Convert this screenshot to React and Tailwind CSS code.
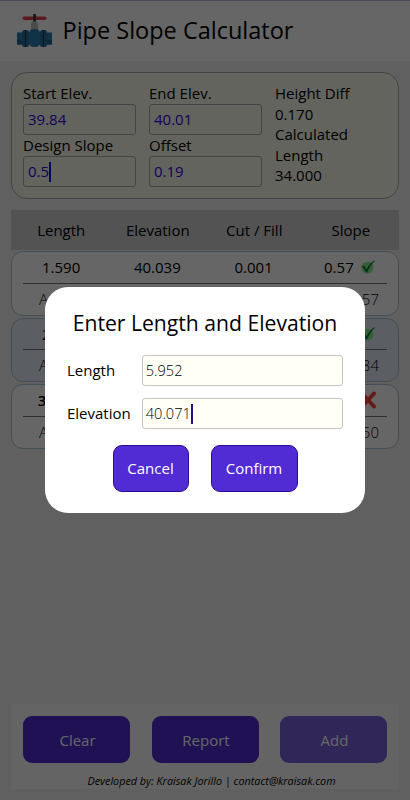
const rows = [
  { length: "1.590", elevation: "40.039", cutFill: "0.001", slope: "0.57", ok: true, last: "0.57", bg: "bg-white" },
  { length: "2.970", elevation: "40.025", cutFill: "0.000", slope: "0.52", ok: true, last: "0.84", bg: "bg-[#e4eaf6]" },
  { length: "34.000", elevation: "40.010", cutFill: "0.010", slope: "0.47", ok: false, last: "0.50", bg: "bg-white" },
];

function ValveLogo() {
  return (
    <svg width="36" height="34" viewBox="0 0 36 34">
      <path d="M14 17v-6q0-4 3.500-4t3.500 4v6z" fill="#bdbdbd" />
      <rect x="5.500" y="2.500" width="24" height="3.600" rx="1.800" fill="#e0424a" />
      <rect x="16.300" y="0" width="2.600" height="7.500" fill="#333" />
      <rect x="0" y="18.500" width="35" height="12" fill="#2878a8" />
      <rect x="0" y="26" width="35" height="4.500" fill="#1d628f" />
      <rect x="5" y="16" width="7" height="17" rx="2.500" fill="#27719f" />
      <rect x="23" y="16" width="7" height="17" rx="2.500" fill="#27719f" />
      <path d="M8.500 16v17M26.500 16v17" stroke="#123f60" strokeWidth="1.300" />
      <rect x="12" y="15" width="11" height="18" rx="4.500" fill="#2b80b4" />
    </svg>
  );
}

function CheckMark() {
  return (
    <svg width="16" height="16" viewBox="0 0 16 16" className="shrink-0">
      <circle cx="7.300" cy="8.700" r="6" fill="#8ee88b" />
      <path d="M1.800 7.600 4 6.800l2.600 3.400C8.600 6.300 11 3.400 14.500 1.200l.4.5C11.400 5.200 9 9 7.200 13.300H5.900C4.800 11 3.500 9.100 1.800 7.600Z" fill="#008040" />
    </svg>
  );
}

function CrossMark() {
  return (
    <svg width="18" height="18" viewBox="0 0 18 18" className="shrink-0">
      <path d="M3 2.500l12 13M15 2.500 3 15.500" stroke="#ff4538" strokeWidth="4" strokeLinecap="round" />
    </svg>
  );
}

function Field({ label, value, caret }) {
  return (
    <div>
      <div className="h-[21px] leading-[21px]">{label}</div>
      <div className="flex h-[31px] items-center rounded-[3px] border border-[#aaa] pl-1 text-[#3000e8]">
        {value}
        {caret && <span className="h-5 w-[1.5px] bg-[#1600ff]" />}
      </div>
    </div>
  );
}

function ResultRow({ row }) {
  return (
    <div className={`flex h-[64.5px] flex-col rounded-[12px] border border-[#a9c6d8] ${row.bg}`}>
      <div className="grid h-8 grid-cols-4 items-center pl-px text-center">
        <span className={row.ok ? "" : "font-semibold"}>{row.length}</span>
        <span>{row.elevation}</span>
        <span>{row.cutFill}</span>
        <span className="flex items-center justify-center gap-1.5">
          {row.slope}
          {row.ok ? <CheckMark /> : <CrossMark />}
        </span>
      </div>
      <div className="mx-[11px] h-px bg-[#777]" />
      <div className="flex h-8 items-center justify-between pr-[19px] pl-[27px] font-light">
        <span>Actual Slope</span>
        <span>{row.last}</span>
      </div>
    </div>
  );
}

function DialogField({ label, value, caret }) {
  return (
    <div className="flex items-center">
      <span className="w-[75px]">{label}</span>
      <div className="flex h-[31px] w-[202px] items-center rounded-[3px] border border-[#c4c4c4] bg-[#fffff6] pl-[3px] text-[14.6px] font-light">
        {value}
        {caret && <span className="h-5 w-[2px] bg-[#23108a]" />}
      </div>
    </div>
  );
}

function App() {
  return (
    <div className="relative flex h-[800px] w-[410px] flex-col overflow-hidden bg-[#f1f1f1] font-['Open_Sans','Noto_Sans',sans-serif] text-[15px] text-black">
      <header className="flex h-[61px] shrink-0 items-center border-t border-[#b9b4e4] bg-white pl-[17px]">
        <ValveLogo />
        <h1 className="ml-[9.5px] text-[23.5px]">Pipe Slope Calculator</h1>
      </header>

      <section className="mx-[11px] mt-[11px] grid h-[127px] grid-cols-[113px_113px_1fr] gap-x-[13px] rounded-[16px] border border-[#aaa] bg-[#fafaea] pt-[10px] pl-[11px]">
        <div>
          <Field label="Start Elev." value="39.84" />
          <Field label="Design Slope" value="0.5" caret />
        </div>
        <div>
          <Field label="End Elev." value="40.01" />
          <Field label="Offset" value="0.19" />
        </div>
        <div className="w-[90px] leading-[20.5px]">
          <div>Height Diff</div>
          <div>0.170</div>
          <div>Calculated Length</div>
          <div>34.000</div>
        </div>
      </section>

      <section className="mx-[11px] mt-[11px]">
        <div className="grid h-10 grid-cols-4 items-center bg-[#cfcfcf] pl-0.5 text-center">
          <span>Length</span>
          <span>Elevation</span>
          <span>Cut / Fill</span>
          <span>Slope</span>
        </div>
        <div className="mt-px flex flex-col gap-[2px]">
          {rows.map((row) => (
            <ResultRow key={row.length} row={row} />
          ))}
        </div>
      </section>

      <footer className="mx-[11px] mt-auto mb-[11px] h-[85px] bg-[#fbfbfb] px-3 pt-3">
        <div className="grid grid-cols-3 gap-[21.5px] text-white">
          <button className="h-[47px] rounded-[9px] bg-[#512bd4] pt-0.5 pl-0.5">Clear</button>
          <button className="h-[47px] rounded-[9px] bg-[#512bd4] pt-0.5 pl-0.5">Report</button>
          <button className="h-[47px] rounded-[9px] bg-[#512bd4] pt-0.5 pl-0.5 opacity-75">Add</button>
        </div>
        <p className="mt-[10px] pl-[13px] text-center text-[10.8px] whitespace-nowrap italic">
          Developed by: Kraisak Jorillo | contact@kraisak.com
        </p>
      </footer>

      <div className="absolute inset-0 flex flex-col items-center bg-black/60 pt-[287px]">
        <div className="h-[226px] w-[320px] rounded-[23px] bg-white px-[22px] pt-5">
          <h2 className="text-center text-[21.15px] leading-8 whitespace-nowrap">Enter Length and Elevation</h2>
          <div className="mt-4 flex flex-col gap-3">
            <DialogField label="Length" value="5.952" />
            <DialogField label="Elevation" value="40.071" caret />
          </div>
          <div className="mt-4 flex justify-center gap-[22px] text-white">
            <button className="h-[47px] w-[76px] rounded-[9px] border border-[#2b0b98] bg-[#512bd4]">Cancel</button>
            <button className="h-[47px] w-[87px] rounded-[9px] border border-[#2b0b98] bg-[#512bd4]">Confirm</button>
          </div>
        </div>
      </div>
    </div>
  );
}

export default App;
